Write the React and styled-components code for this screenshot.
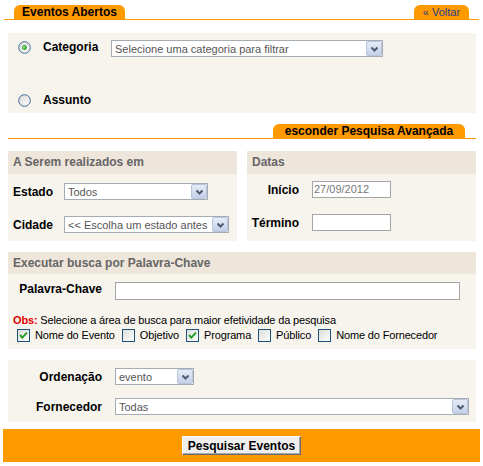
import React from 'react';
import styled, { createGlobalStyle } from 'styled-components';

const orange = '#ff9900';
const panelBg = '#f7f3ed';
const headBg = '#eee5db';

const GlobalStyle = createGlobalStyle`
  body {
    margin:0;
    background:#fff;
    font-family:Tahoma, "Liberation Sans", Arial, sans-serif;
    font-size:11px;
    color:#000;
  }
`;

function Radio({ checked }) {
  return (
    <RadioSvg width="13" height="13" viewBox="0 0 13 13">
      <defs>
        <linearGradient id="radioFill" x1="0" y1="0" x2="1" y2="1">
          <stop offset="0" stopColor="#d8d8d2" />
          <stop offset="1" stopColor="#ffffff" />
        </linearGradient>
      </defs>
      <circle cx="6.5" cy="6.5" r="5.8" fill="url(#radioFill)" stroke="#3d6a98" strokeWidth="1" />
      {checked && <circle cx="6.5" cy="6.5" r="2.4" fill="#3aae3a" />}
      {checked && <circle cx="6" cy="6" r="0.9" fill="#a6e6a6" />}
    </RadioSvg>
  );
}

function Check({ checked }) {
  return (
    <CheckSvg width="13" height="13" viewBox="0 0 13 13">
      <defs>
        <linearGradient id="checkFill" x1="0" y1="0" x2="1" y2="1">
          <stop offset="0" stopColor="#dcdcd7" />
          <stop offset="1" stopColor="#ffffff" />
        </linearGradient>
      </defs>
      <rect x="0.5" y="0.5" width="12" height="12" fill="url(#checkFill)" stroke="#1c5180" />
      {checked && <path d="M3 6 L5.3 8.6 L10 3.6" fill="none" stroke="#21a121" strokeWidth="2" />}
    </CheckSvg>
  );
}

function Select({ w, children }) {
  return (
    <SelectBox $w={w}>
      <SelectText>{children}</SelectText>
      <Arrow>
        <svg width="9" height="6" viewBox="0 0 9 6">
          <path d="M1.5 1.5 L4.5 4.5 L7.5 1.5" fill="none" stroke="#4d5a72" strokeWidth="2" />
        </svg>
      </Arrow>
    </SelectBox>
  );
}

const areas = [
  { name: 'Nome do Evento', on: true },
  { name: 'Objetivo', on: false },
  { name: 'Programa', on: true },
  { name: 'Público', on: false },
  { name: 'Nome do Fornecedor', on: false },
];

export default function App() {
  return (
    <>
      <GlobalStyle />
      <Page>
        <HeaderBar>
          <Tab $w={111}>Eventos Abertos</Tab>
          <BackTab $w={55}>« Voltar</BackTab>
        </HeaderBar>

        <Content>
          <ChoicePanel>
            <ChoiceRow>
              <Radio checked />
              <ChoiceLabel>Categoria</ChoiceLabel>
              <Select w={272}>Selecione uma categoria para filtrar</Select>
            </ChoiceRow>
            <ChoiceRow>
              <Radio />
              <ChoiceLabel>Assunto</ChoiceLabel>
            </ChoiceRow>
          </ChoicePanel>

          <AdvancedBar>
            <Tab $w={192}>esconder Pesquisa Avançada</Tab>
          </AdvancedBar>

          <Columns>
            <Box>
              <BoxHeader>A Serem realizados em</BoxHeader>
              <FieldGrid $cols="51px auto" $gap={0} $rowGap={16} $pad="9px 0 8px 5px">
                <FieldLabel>Estado</FieldLabel>
                <Select w={144}>Todos</Select>
                <FieldLabel>Cidade</FieldLabel>
                <Select w={165}>&lt;&lt; Escolha um estado antes</Select>
              </FieldGrid>
            </Box>
            <Box>
              <BoxHeader>Datas</BoxHeader>
              <FieldGrid $cols="52px 79px" $gap={13} $rowGap={16} $pad="7px 0 0 0">
                <FieldLabel $right>Início</FieldLabel>
                <TextInput $h={17}>27/09/2012</TextInput>
                <FieldLabel $right>Término</FieldLabel>
                <TextInput $h={17} />
              </FieldGrid>
            </Box>
          </Columns>

          <KeywordBox>
            <BoxHeader $h={22}>Executar busca por Palavra-Chave</BoxHeader>
            <KeywordBody>
              <FieldGrid $cols="94px 345px" $gap={13} $rowGap={0} $pad="0" $top>
                <FieldLabel $right>Palavra-Chave</FieldLabel>
                <TextInput $h={18} />
              </FieldGrid>
              <Obs><strong>Obs:</strong> Selecione a área de busca para maior efetividade da pesquisa</Obs>
              <CheckRow>
                {areas.map((a) => (
                  <CheckItem key={a.name}>
                    <Check checked={a.on} />
                    {a.name}
                  </CheckItem>
                ))}
              </CheckRow>
            </KeywordBody>
          </KeywordBox>

          <OrderPanel>
            <FieldGrid $cols="94px auto" $gap={13} $rowGap={13} $pad="8px 0 7px 0">
              <FieldLabel $right>Ordenação</FieldLabel>
              <Select w={79}>evento</Select>
              <FieldLabel $right>Fornecedor</FieldLabel>
              <Select w={354}>Todas</Select>
            </FieldGrid>
          </OrderPanel>
        </Content>

        <BottomBar>
          <SearchButton>Pesquisar Eventos</SearchButton>
        </BottomBar>
      </Page>
    </>
  );
}

const Page = styled.div`
  width:483px;
  height:466px;
  overflow:hidden;
`;

const HeaderBar = styled.div`
  display:flex;
  justify-content:space-between;
  align-items:flex-end;
  margin:0 4px;
  padding:5px 10px 0;
  border-bottom:1px solid ${orange};
`;

const Tab = styled.div`
  width:${(p) => p.$w}px;
  height:14px;
  line-height:14px;
  background:${orange};
  border-radius:6px 6px 0 0;
  text-align:center;
  font-size:12px;
  font-weight:bold;
  white-space:nowrap;
`;

const BackTab = styled(Tab)`
  font-size:11px;
  font-weight:normal;
  color:#1f3d8f;
`;

const Content = styled.div`
  margin:0 7px 0 8px;
  display:flex;
  flex-direction:column;
`;

const ChoicePanel = styled.div`
  margin-top:13px;
  background:${panelBg};
  padding:7px 0 6px 10px;
  display:flex;
  flex-direction:column;
  gap:36px;
`;

const ChoiceRow = styled.div`
  display:flex;
  align-items:flex-start;
`;

const RadioSvg = styled.svg`
  flex-shrink:0;
  margin-top:1px;
  margin-right:12px;
`;

const ChoiceLabel = styled.div`
  width:68px;
  font-size:12px;
  font-weight:bold;
  line-height:14px;
`;

const SelectBox = styled.div`
  display:flex;
  align-items:center;
  width:${(p) => p.$w}px;
  height:17px;
  box-sizing:border-box;
  border:1px solid #a5acb2;
  background:#fff;
  color:#555;
  font-size:11px;
`;

const SelectText = styled.span`
  flex:1;
  padding-left:3px;
  white-space:nowrap;
  overflow:hidden;
`;

const Arrow = styled.span`
  display:flex;
  align-items:center;
  justify-content:center;
  width:16px;
  height:15px;
  box-sizing:border-box;
  border:1px solid #b8c4dc;
  border-radius:2px;
  background:linear-gradient(#e6ecf7, #c4d0e8);
`;

const AdvancedBar = styled.div`
  margin-top:11px;
  display:flex;
  justify-content:flex-end;
  padding:0 11px;
  border-bottom:1px solid ${orange};
`;

const Columns = styled.div`
  margin-top:12px;
  display:grid;
  grid-template-columns:1fr 1fr;
  gap:10px;
`;

const Box = styled.div`
  background:${panelBg};
  display:flex;
  flex-direction:column;
`;

const BoxHeader = styled.div`
  height:${(p) => p.$h || 23}px;
  line-height:${(p) => p.$h || 23}px;
  background:${headBg};
  color:#666;
  font-size:12px;
  font-weight:bold;
  padding-left:5px;
`;

const FieldGrid = styled.div`
  display:grid;
  grid-template-columns:${(p) => p.$cols};
  column-gap:${(p) => p.$gap}px;
  row-gap:${(p) => p.$rowGap}px;
  padding:${(p) => p.$pad};
  align-items:${(p) => (p.$top ? 'start' : 'center')};
  justify-items:start;
`;

const FieldLabel = styled.div`
  justify-self:${(p) => (p.$right ? 'end' : 'start')};
  font-size:12px;
  font-weight:bold;
  line-height:14px;
  white-space:nowrap;
`;

const TextInput = styled.div`
  width:100%;
  height:${(p) => p.$h}px;
  box-sizing:border-box;
  border:1px solid #a5a5a5;
  background:#fff;
  color:#777;
  font-size:11px;
  line-height:15px;
  padding-left:1px;
`;

const KeywordBox = styled(Box)`
  margin-top:11px;
`;

const KeywordBody = styled.div`
  padding:8px 0 7px 0;
`;

const Obs = styled.div`
  margin-top:14px;
  padding-left:5px;
  line-height:13px;
  letter-spacing:-0.15px;
  strong {
    color:#e00000;
  }
`;

const CheckRow = styled.div`
  margin-top:1px;
  padding-left:9px;
  display:flex;
  align-items:center;
  gap:7px;
  line-height:14px;
  letter-spacing:-0.15px;
`;

const CheckItem = styled.label`
  display:flex;
  align-items:center;
  gap:5px;
`;

const CheckSvg = styled.svg`
  flex-shrink:0;
`;

const OrderPanel = styled.div`
  margin-top:11px;
  background:${panelBg};
`;

const BottomBar = styled.div`
  margin:7px 3px 0;
  height:33px;
  background:${orange};
  display:flex;
  justify-content:center;
  align-items:center;
`;

const SearchButton = styled.button`
  width:119px;
  height:19px;
  padding:0;
  background:#efefef;
  border:1px solid;
  border-color:#fff #6a6a6a #6a6a6a #fff;
  box-shadow:inset -1px -1px #a8a8a8;
  font-family:inherit;
  font-size:12px;
  font-weight:bold;
  color:#000;
`;
